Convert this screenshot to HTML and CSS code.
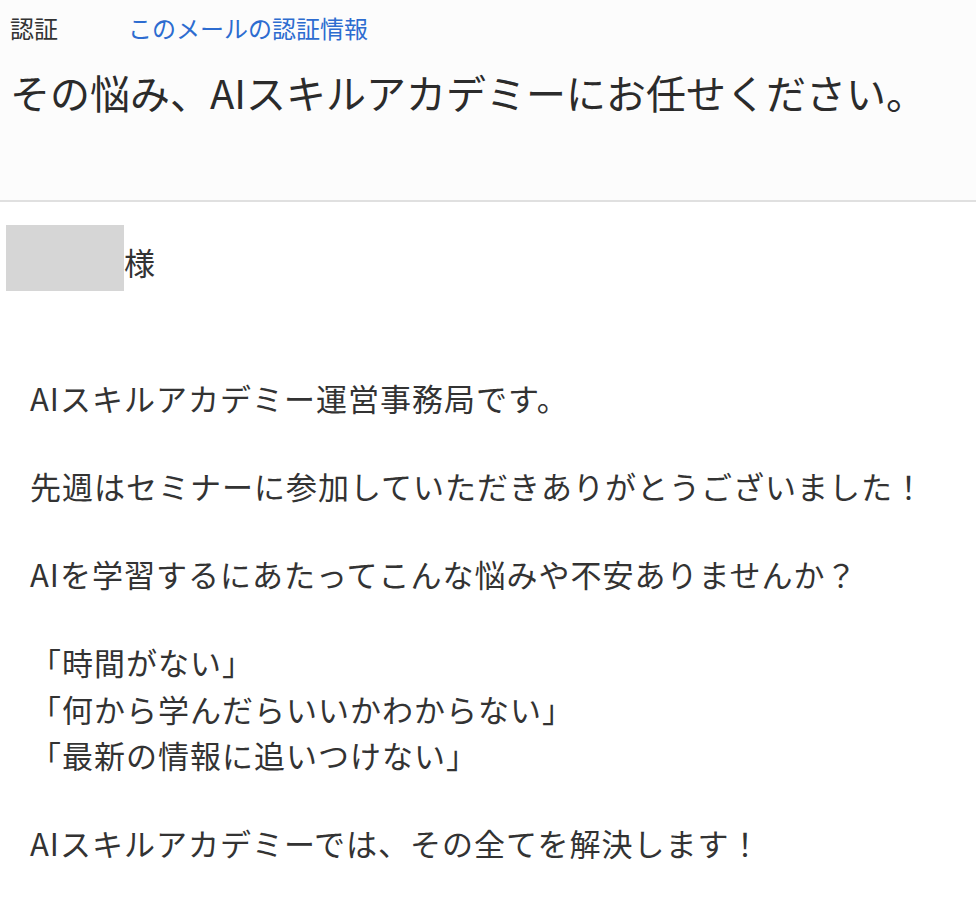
FILE: index.html
```html
<!DOCTYPE html>
<html lang="ja">
<head>
<meta charset="utf-8">
<title>その悩み、AIスキルアカデミーにお任せください。</title>
<link rel="stylesheet" href="styles.css">
</head>
<body>
<header class="mail-header">
  <div class="auth-row">
    <span class="auth-label">認証</span>
    <a class="auth-link" href="#">このメールの認証情報</a>
  </div>
  <h1 class="subject">その悩み、AIスキルアカデミーにお任せください。</h1>
</header>
<main class="mail-body">
  <div class="recipient"><span class="redacted"></span><span class="honorific">様</span></div>
  <div class="content">
    <p>AIスキルアカデミー運営事務局です。</p>
    <p>先週はセミナーに参加していただきありがとうございました！</p>
    <p>AIを学習するにあたってこんな悩みや不安ありませんか？</p>
    <p>「時間がない」<br>「何から学んだらいいかわからない」<br>「最新の情報に追いつけない」</p>
    <p>AIスキルアカデミーでは、その全てを解決します！</p>
  </div>
</main>
</body>
</html>
```
FILE: styles.css
```css
html, body {
  margin: 0;
  padding: 0;
  background: #ffffff;
}
body {
  font-family: "Noto Sans CJK JP", "Noto Sans", sans-serif;
  color: #333333;
  width: 976px;
  height: 924px;
  overflow: hidden;
}
.mail-header {
  background: #fcfcfc;
  border-bottom: 2px solid #e0e0e0;
  height: 202px;
  box-sizing: border-box;
  padding: 11px 10px 0;
}
.auth-row {
  display: flex;
  align-items: baseline;
  font-size: 24px;
  line-height: 34px;
}
.auth-label {
  width: 118px;
  color: #333333;
}
.auth-link {
  color: #2d6cd0;
  text-decoration: none;
}
.subject {
  margin: 19px 0 0;
  font-weight: normal;
  font-size: 40px;
  line-height: 56px;
  letter-spacing: 0;
  color: #2b2b2b;
}
.mail-body {
  padding: 23px 6px 0;
}
.recipient {
  display: flex;
  align-items: center;
  font-size: 31px;
}
.redacted {
  display: block;
  width: 118px;
  height: 66px;
  background: #d6d6d6;
}
.honorific {
  margin-top: 6px;
}
.content {
  padding: 84px 0 0 24px;
  font-size: 31px;
  line-height: 46.5px;
  letter-spacing: 1px;
}
.content p {
  margin: 0 0 41.5px;
}
```
